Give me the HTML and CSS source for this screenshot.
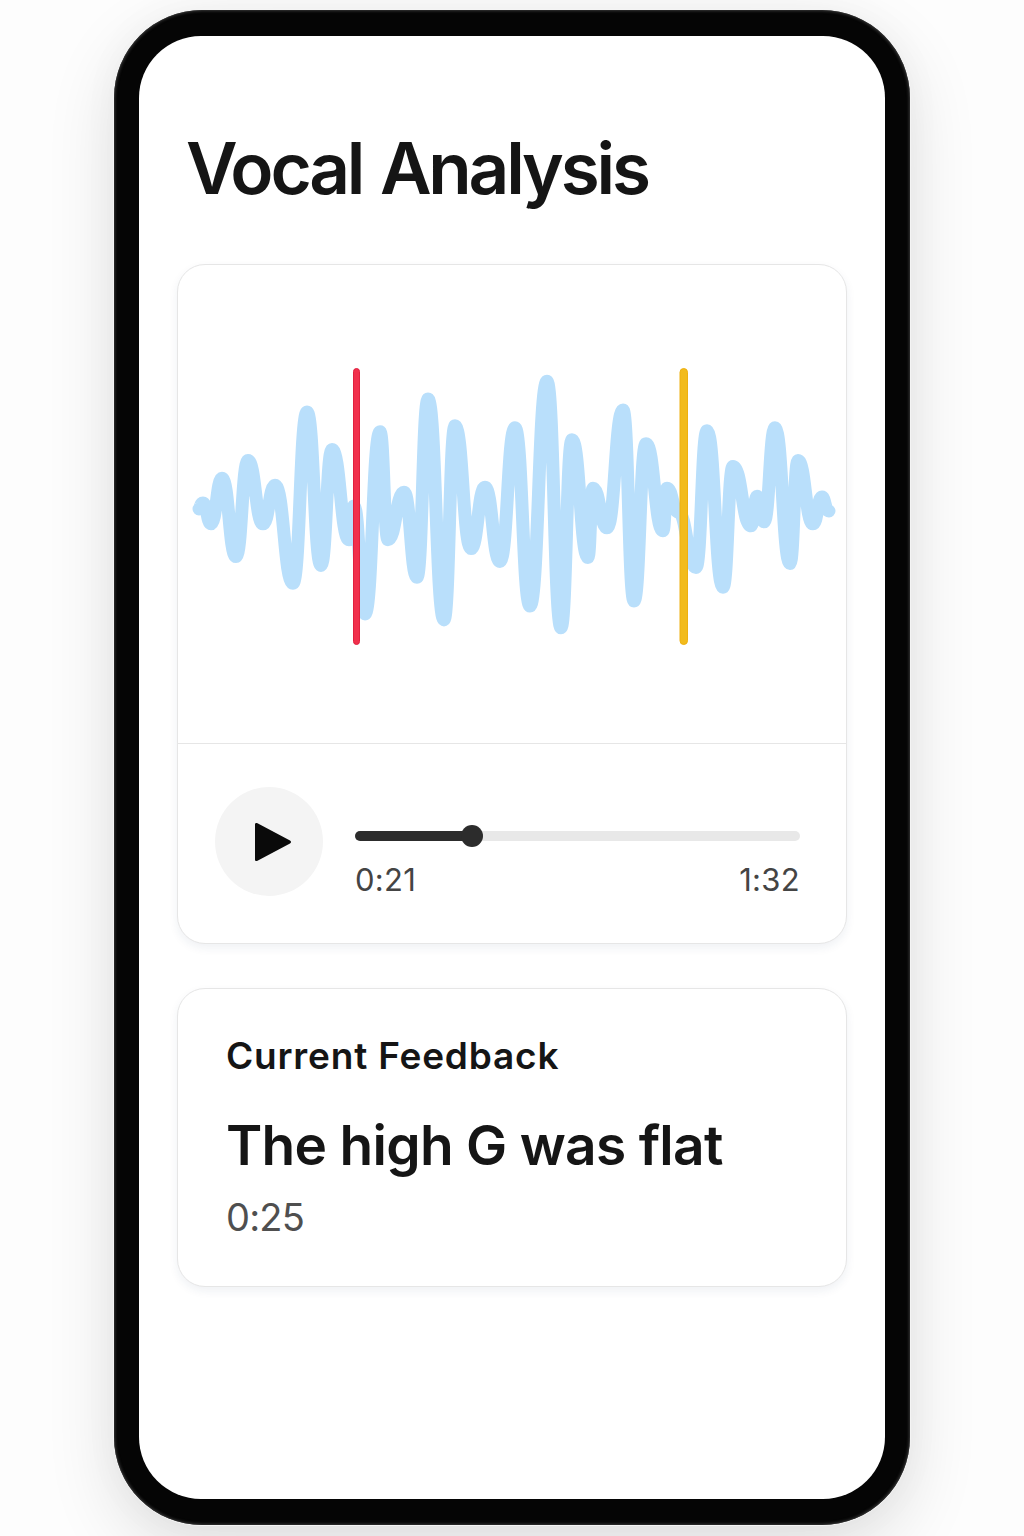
FILE: index.html
```html
<!DOCTYPE html>
<html lang="en">
<head>
<meta charset="utf-8">
<title>Vocal Analysis</title>
<link rel="stylesheet" href="styles.css">
</head>
<body>
<main class="phone">
  <div class="screen">
    <h1 class="title">Vocal Analysis</h1>
    <section class="card player">
      <div class="wave-area">
        <svg class="wave" viewBox="178 265 668 478" aria-hidden="true">
          <path class="wave-line" transform="translate(0 5.09) scale(1 .99)" d="M199 509C200 509 200 503 203 503C207 503 207 524 211 524C216.500 524 216.500 478 222 478C229 478 229 557 236 557C242 557 242 460 248 460C255.500 460 255.500 524 263 524C269 524 269 485 275 485C284 485 284 584 293 584C300 584 300 411 307 411C314 411 314 566 321 566C326.500 566 326.500 449 332 449C340.500 449 340.500 540 349 540C351.500 540 351.500 506 354 506C359.500 506 359.500 615 365 615C372.500 615 372.500 431 380 431C384 431 384 540 388 540C396 540 396 492 404 492C410.500 492 410.500 578 417 578C422.500 578 422.500 398 428 398C436 398 436 621 444 621C449.500 621 449.500 425 455 425C463 425 463 549 471 549C478 549 478 487 485 487C492.500 487 492.500 562 500 562C507.500 562 507.500 427 515 427C522.500 427 522.500 607 530 607C538.500 607 538.500 380 547 380C554 380 554 629 561 629C566.500 629 566.500 439 572 439C580 439 580 558 588 558C590.500 558 590.500 488 593 488C600 488 600 528 607 528C615 528 615 409 623 409C628.500 409 628.500 602 634 602C640 602 640 443 646 443C654.500 443 654.500 531 663 531C665 531 665 488 667 488C672.500 488 672.500 512 678 512C687 512 687 568 696 568C701.500 568 701.500 430 707 430C715 430 715 588 723 588C728 588 728 466 733 466C742 466 742 526 751 526C754 526 754 496 757 496C760.500 496 760.500 522 764 522C769.500 522 769.500 427 775 427C782.500 427 782.500 564 790 564C794 564 794 460 798 460C805.500 460 805.500 524 813 524C817.500 524 817.500 497 822 497C825 497 825 511 829 511" />
          <rect class="marker marker-red" x="353.500" y="368.500" width="6" height="276" rx="3" />
          <rect class="marker marker-yellow" x="680" y="368.500" width="7.500" height="276" rx="3.750" />
        </svg>
      </div>
      <div class="controls">
        <button class="play" type="button" aria-label="Play">
          <svg class="play-icon" viewBox="0 0 38 40"><path d="M1 2.500C1 1 2.200 .6 3.500 1.300L36 18.500C37.400 19.300 37.400 20.700 36 21.500L3.500 38.700C2.200 39.400 1 39 1 37.500Z" /></svg>
        </button>
        <div class="progress">
          <div class="track">
            <div class="fill" style="width:26.300%"><span class="knob"></span></div>
          </div>
          <div class="times"><span>0:21</span><span>1:32</span></div>
        </div>
      </div>
    </section>
    <section class="card feedback">
      <h2 class="feedback-label">Current Feedback</h2>
      <p class="feedback-text">The high G was flat</p>
      <p class="feedback-time">0:25</p>
    </section>
  </div>
</main>
</body>
</html>
```
FILE: styles.css
```css
* { box-sizing: border-box; }
html, body { margin: 0; height: 100%; }
body {
  background: #fdfdfd;
  font-family: Inter, "Noto Sans", sans-serif;
  color: #151515;
  display: flex;
  justify-content: center;
  align-items: flex-start;
  padding: 10px 0 0;
  overflow: hidden;
}
.phone {
  width: 796px;
  height: 1515px;
  background: #050505;
  border-radius: 88px;
  padding: 26px 25px;
  box-shadow: inset 0 0 3px 1px #3a3a3a, 0 0 0 1px #f4f4f4, 0 24px 70px rgba(0,0,0,.12), 0 0 40px rgba(0,0,0,.03);
  flex: none;
}
.screen {
  height: 100%;
  background: #fff;
  border-radius: 62px;
  padding: 89px 38px 0;
  display: flex;
  flex-direction: column;
}
.title {
  margin: 0 0 53px 9px;
  font-size: 71px;
  line-height: 86px;
  font-weight: 600;
  letter-spacing: -3.2px;
  word-spacing: 3px;
}
.card {
  background: #fff;
  border: 1px solid #e6e6e6;
  border-radius: 28px;
  box-shadow: 0 4px 10px rgba(30,60,100,.07);
}
.player { height: 680px; display: flex; flex-direction: column; }
.wave-area { height: 479px; border-bottom: 1px solid #e6e6e6; flex: none; }
.wave { display: block; width: 668px; height: 478px; }
.wave-line {
  fill: none;
  stroke: #b9dffb;
  stroke-width: 13;
  stroke-linecap: round;
  stroke-linejoin: round;
  vector-effect: non-scaling-stroke;
}
.marker-red { fill: #f1304c; stroke: #e0203f; stroke-width: 1; }
.marker-yellow { fill: #f2bb1c; stroke: #eeb010; stroke-width: 1; }
.controls {
  flex: 1;
  display: flex;
  align-items: flex-start;
  gap: 32px;
  padding: 43px 46px 0 37px;
}
.play {
  width: 108px;
  height: 109px;
  border: 0;
  border-radius: 50%;
  background: #f4f4f4;
  padding: 0 0 0 8px;
  display: flex;
  align-items: center;
  justify-content: center;
  flex: none;
}
.play-icon { display: block; width: 38px; height: 40px; fill: #0a0a0a; }
.progress { flex: 1; padding-top: 44px; }
.track { height: 10px; border-radius: 5px; background: #e8e8e8; }
.fill {
  height: 100%;
  background: #2c2c2c;
  border-radius: 5px;
  position: relative;
}
.knob {
  position: absolute;
  right: -11px;
  top: -6px;
  width: 22px;
  height: 22px;
  border-radius: 50%;
  background: #2c2c2c;
}
.times {
  display: flex;
  justify-content: space-between;
  margin-top: 20px;
  font-size: 31px;
  line-height: 38px;
  color: #444;
  letter-spacing: .3px;
}
.feedback { margin-top: 44px; height: 299px; padding: 44px 48px 0; }
.feedback-label {
  margin: 0;
  font-size: 37px;
  line-height: 46px;
  font-weight: 600;
  letter-spacing: .8px;
}
.feedback-text {
  margin: 33px 0 0;
  font-size: 55px;
  line-height: 66px;
  font-weight: 600;
  letter-spacing: -.7px;
}
.feedback-time {
  margin: 16px 0 0;
  font-size: 38px;
  line-height: 46px;
  color: #4f4f4f;
  letter-spacing: -.8px;
}
```
